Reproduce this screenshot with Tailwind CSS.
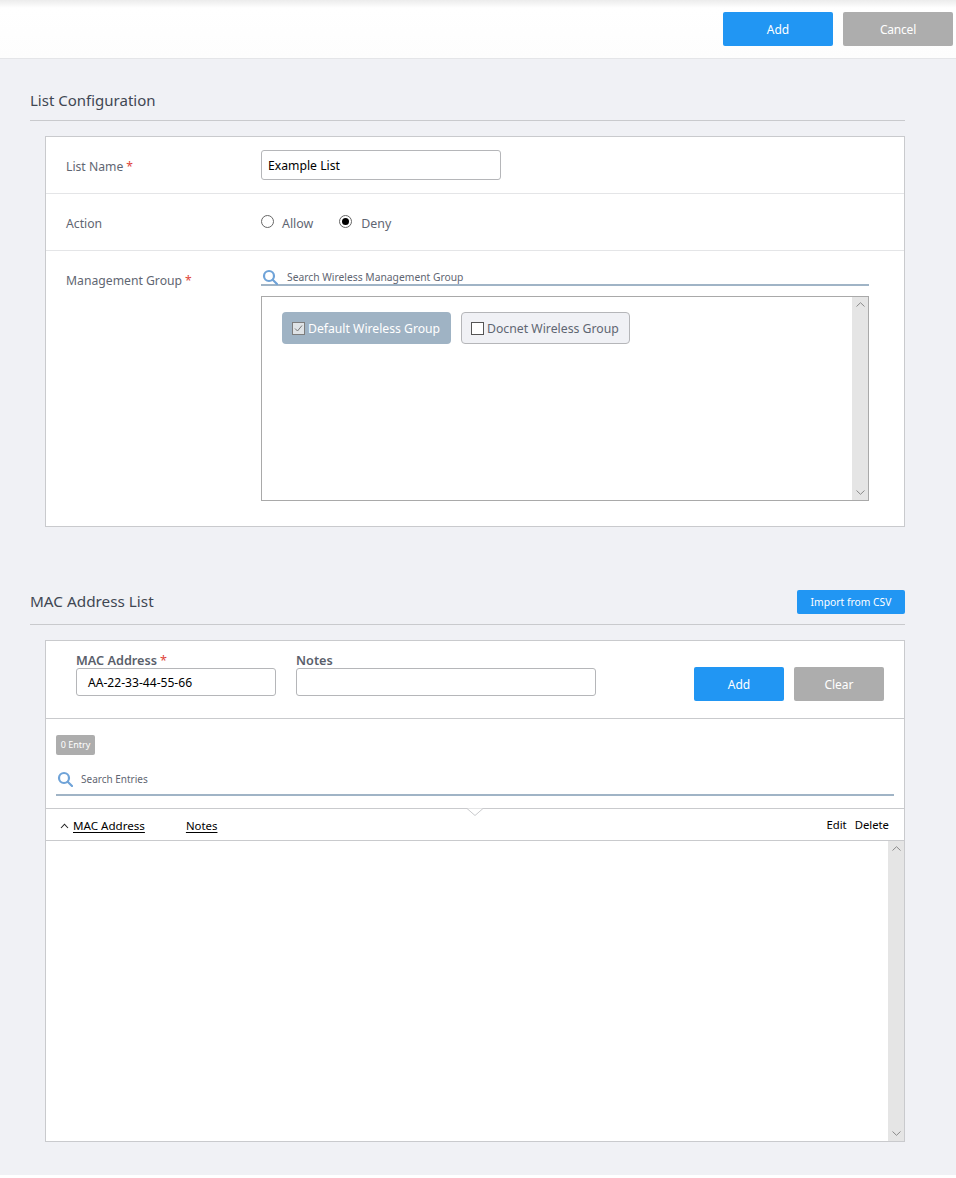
<!DOCTYPE html>
<html>
<head>
<meta charset="utf-8">
<script src="https://cdn.jsdelivr.net/npm/@tailwindcss/browser@4"></script>
</head>
<body class="bg-white font-['Noto_Sans',sans-serif] w-[956px] h-[1178px] overflow-hidden">
<header class="h-[59px] border-b border-[#e4e5e8] bg-gradient-to-b from-[#ececec] via-white via-[8px] to-[#fdfdfd] flex justify-end items-start gap-[10px] pt-[12px] pr-[3px]">
  <button class="w-[110px] h-[34px] pt-[1px] rounded-[2px] bg-[#2196f3] text-white text-[12px]">Add</button>
  <button class="w-[110px] h-[34px] pt-[1px] rounded-[2px] bg-[#adadad] text-white text-[12px] tracking-[-0.2px]">Cancel</button>
</header>
<main class="h-[1116px] bg-[#f0f1f5] pt-[30px] pl-[30px] pr-[51px]">
  <section>
    <div class="h-[32px] border-b border-[#c9cacd] flex items-start">
      <h2 class="text-[15px] leading-[24px] mt-[-1px] text-[#3f4753]">List Configuration</h2>
    </div>
    <div class="ml-[15px] mt-[15px] h-[391px] border border-[#c9cacd] bg-white">
      <div class="h-[57px] border-b border-[#e4e5e7] flex items-center">
        <div class="w-[215px] pl-[20px] pt-[4px] text-[12.2px] text-[#5f6672]">List Name<span class="text-[#e0453a] ml-[3px]">*</span></div>
        <div class="w-[240px] h-[30px] border border-[#b5b6b9] rounded-[3px] flex items-center pl-[6px] pt-[3px] text-[12.2px] text-black">Example List</div>
      </div>
      <div class="h-[57px] border-b border-[#e4e5e7] flex items-center">
        <div class="w-[215px] pl-[20px] pt-[4px] text-[12.2px] text-[#5f6672]">Action</div>
        <div class="flex items-center text-[12.4px] text-[#5f6672] pt-[2px]">
          <span class="w-[13px] h-[13px] rounded-full border border-[#666] bg-white mt-[-3px]"></span>
          <span class="ml-[8px] pt-[2px]">Allow</span>
          <span class="ml-[26px] w-[13px] h-[13px] rounded-full border border-[#666] bg-white flex items-center justify-center mt-[-3px]"><span class="w-[7px] h-[7px] rounded-full bg-black"></span></span>
          <span class="ml-[9px] pt-[2px]">Deny</span>
        </div>
      </div>
      <div class="flex pt-[16px]">
        <div class="w-[215px] pl-[20px] text-[12.2px] leading-[20px] text-[#5f6672] pt-[4px]">Management Group<span class="text-[#e0453a] ml-[3px]">*</span></div>
        <div class="w-[608px]">
          <div class="h-[19px] border-b-2 border-[#a0b4c6] flex items-start">
            <svg class="ml-[1px] mt-[2px]" width="16" height="16" viewBox="0 0 16 16" fill="none" stroke="#6fa3d8" stroke-width="2.2"><circle cx="7" cy="7" r="5"/><path d="M10.7 10.7 15 15" stroke-linecap="round"/></svg>
            <span class="ml-[9px] mt-[2px] text-[10.3px] leading-[16px] text-[#5f6672]">Search Wireless Management Group</span>
          </div>
          <div class="mt-[10px] h-[205px] border border-[#a9a9a9] flex justify-between">
            <div class="flex items-start gap-[10px] pl-[20px] pt-[15px]">
              <div class="h-[32px] w-[169px] rounded-[4px] bg-[#9fb3c4] flex items-center pl-[10px] text-[12.2px] text-white">
                <span class="w-[13px] h-[13px] border border-[#7d7d7d] bg-[#dfe3e6] flex items-center justify-center mr-[3px]"><svg width="9" height="9" viewBox="0 0 9 9" fill="none" stroke="#777" stroke-width="1"><path d="M1 4.5 3.5 7 8 1.5"/></svg></span>
                <span class="pt-[2px]">Default Wireless Group</span>
              </div>
              <div class="h-[32px] w-[169px] rounded-[4px] bg-[#f0f1f5] border border-[#b5b6b9] flex items-center pl-[9px] text-[12.25px] text-[#5f6672]">
                <span class="w-[13px] h-[13px] border border-[#555] bg-white mr-[3px]"></span>
                <span class="pt-[2px]">Docnet Wireless Group</span>
              </div>
            </div>
            <div class="w-[16px] bg-[#e5e5e5] flex flex-col justify-between items-center py-[5px]">
              <svg width="9" height="5" viewBox="0 0 9 5" fill="none" stroke="#8a8a8a"><path d="M.5 4.5 4.5.7 8.5 4.5"/></svg>
              <svg width="9" height="5" viewBox="0 0 9 5" fill="none" stroke="#8a8a8a"><path d="M.5.5 4.5 4.3 8.5.5"/></svg>
            </div>
          </div>
        </div>
      </div>
    </div>
  </section>
  <section class="mt-[58px]">
    <div class="h-[40px] border-b border-[#c9cacd] flex items-start justify-between">
      <h2 class="text-[15.3px] leading-[24px] mt-[4px] text-[#3f4753]">MAC Address List</h2>
      <button class="w-[108px] h-[24px] mt-[5px] pt-[2px] rounded-[2px] bg-[#2196f3] text-white text-[10.3px]">Import from CSV</button>
    </div>
    <div class="ml-[15px] mt-[15px] h-[502px] border border-[#c9cacd] bg-white flex flex-col">
      <div class="h-[78px] border-b border-[#c9cacd] flex items-start">
        <div class="ml-[30px] w-[200px]">
          <div class="text-[12.7px] font-semibold leading-[14px] mt-[12px] h-[15px] text-[#5a5f6b]">MAC Address<span class="text-[#e0453a] ml-[3px] font-normal">*</span></div>
          <div class="h-[28px] border border-[#b5b6b9] rounded-[3px] flex items-center pl-[11px] pt-[2px] text-[12.1px] text-black">AA-22-33-44-55-66</div>
        </div>
        <div class="ml-[20px] w-[300px]">
          <div class="text-[12.7px] font-semibold leading-[14px] mt-[12px] h-[15px] text-[#5a5f6b]">Notes</div>
          <div class="h-[28px] border border-[#b5b6b9] rounded-[3px]"></div>
        </div>
        <button class="ml-[98px] mt-[26px] w-[90px] h-[34px] pt-[2px] rounded-[2px] bg-[#2196f3] text-white text-[12px]">Add</button>
        <button class="ml-[10px] mt-[26px] w-[90px] h-[34px] pt-[2px] rounded-[2px] bg-[#adadad] text-white text-[12px]">Clear</button>
      </div>
      <div class="h-[90px] border-b border-[#c9cacd] relative px-[10px] pt-[16px]">
        <div class="w-[39px] h-[20px] rounded-[2px] bg-[#adadad] text-white text-[9px] flex items-center justify-center">0 Entry</div>
        <div class="mt-[15px] h-[26px] border-b-2 border-[#a0b4c6] flex items-start">
          <svg class="ml-[1px] mt-[1px]" width="16" height="16" viewBox="0 0 16 16" fill="none" stroke="#6fa3d8" stroke-width="2.2"><circle cx="7" cy="7" r="5"/><path d="M10.7 10.7 15 15" stroke-linecap="round"/></svg>
          <span class="ml-[8px] mt-[1px] text-[10px] leading-[16px] text-[#5f6672]">Search Entries</span>
        </div>
        <svg class="absolute left-[421px] top-[89px]" width="16" height="8" viewBox="0 0 16 8" fill="#fff" stroke="#c9cacd"><path d="M0 .5 8 7.5 16 .5"/></svg>
      </div>
      <div class="h-[32px] border-b border-[#c9cacd] flex items-center pl-[14px] pr-[15px] pt-[2px] text-[11.6px] text-black">
        <svg width="9" height="6" viewBox="0 0 9 6" fill="none" stroke="#222" stroke-width="1.1"><path d="M1 5 4.5 1.2 8 5"/></svg>
        <span class="ml-[4px] underline underline-offset-2">MAC Address</span>
        <span class="ml-[41px] text-[11.4px] underline underline-offset-2">Notes</span>
        <span class="ml-auto text-[11.3px]">Edit</span>
        <span class="ml-[8px] text-[11.3px]">Delete</span>
      </div>
      <div class="flex-1 flex justify-end">
        <div class="w-[16px] bg-[#e5e5e5] flex flex-col justify-between items-center pt-[5px] pb-[5px]">
          <svg width="9" height="5" viewBox="0 0 9 5" fill="none" stroke="#8a8a8a"><path d="M.5 4.5 4.5.7 8.5 4.5"/></svg>
          <svg width="9" height="5" viewBox="0 0 9 5" fill="none" stroke="#8a8a8a"><path d="M.5.5 4.5 4.3 8.5.5"/></svg>
        </div>
      </div>
    </div>
  </section>
</main>
</body>
</html>
